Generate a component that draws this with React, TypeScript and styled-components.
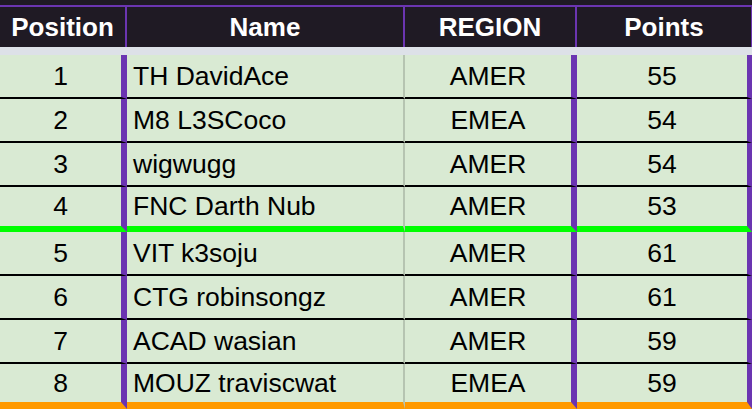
import React from "react";
import styled, { createGlobalStyle } from "styled-components";

type Entry = {
  pos: number;
  name: string;
  region: string;
  points: number;
  cut?: "qualify" | "end";
};

const rows: Entry[] = [
  { pos: 1, name: "TH DavidAce", region: "AMER", points: 55 },
  { pos: 2, name: "M8 L3SCoco", region: "EMEA", points: 54 },
  { pos: 3, name: "wigwugg", region: "AMER", points: 54 },
  { pos: 4, name: "FNC Darth Nub", region: "AMER", points: 53, cut: "qualify" },
  { pos: 5, name: "VIT k3soju", region: "AMER", points: 61 },
  { pos: 6, name: "CTG robinsongz", region: "AMER", points: 61 },
  { pos: 7, name: "ACAD wasian", region: "AMER", points: 59 },
  { pos: 8, name: "MOUZ traviscwat", region: "EMEA", points: 59, cut: "end" },
];

const PURPLE = "#6b35b1";

const GlobalStyle = createGlobalStyle`
  html, body {
    margin: 0;
    padding: 0;
    background: #dde1e8;
    font-family: "Liberation Sans", Arial, sans-serif;
  }
`;

const Sheet = styled.div`
  width: 752px;
  height: 409px;
  overflow: hidden;
`;

const HeaderRow = styled.div`
  display: grid;
  grid-template-columns: 127px 278px 172px 175px;
  background: #1f1a24;
  padding-top: 5px;
`;

const HeaderCell = styled.div<{ $last?: boolean }>`
  height: 40px;
  border-top: 2px solid ${PURPLE};
  border-right: ${(p) => (p.$last ? "1px" : "2px")} solid ${PURPLE};
  display: flex;
  align-items: center;
  justify-content: center;
  color: #fff;
  font-weight: 700;
  font-size: 26px;
`;

const Band = styled.div`
  height: 8px;
  background: #dde1e8;
`;

const Row = styled.div`
  display: grid;
  grid-template-columns: 127px 278px 172px 175px;
`;

const lineFor = (cut?: Entry["cut"]) =>
  cut === "qualify"
    ? "6px solid #00ff00"
    : cut === "end"
    ? "7px solid #ff9900"
    : "2px solid #000";

const Cell = styled.div<{
  $cut?: Entry["cut"];
  $divider: "bar" | "thin" | "edge";
  $align?: "left" | "center";
}>`
  height: ${(p) => (p.$cut === "qualify" ? 39 : p.$cut === "end" ? 38 : 42)}px;
  background: #d9ead3;
  border-bottom: ${(p) => lineFor(p.$cut)};
  border-right: ${(p) =>
    p.$divider === "bar"
      ? `6px solid ${PURPLE}`
      : p.$divider === "edge"
      ? `5px solid ${PURPLE}`
      : "2px solid #b6c4b1"};
  display: flex;
  align-items: center;
  justify-content: ${(p) => (p.$align === "left" ? "flex-start" : "center")};
  padding-left: ${(p) => (p.$align === "left" ? "6px" : "0")};
  color: #000;
  font-size: 26.5px;
  white-space: nowrap;
`;

export default function App() {
  return (
    <Sheet>
      <GlobalStyle />
      <HeaderRow>
        <HeaderCell>Position</HeaderCell>
        <HeaderCell>Name</HeaderCell>
        <HeaderCell>REGION</HeaderCell>
        <HeaderCell $last>Points</HeaderCell>
      </HeaderRow>
      <Band />
      {rows.map((r) => (
        <Row key={r.pos}>
          <Cell $cut={r.cut} $divider="bar">
            {r.pos}
          </Cell>
          <Cell $cut={r.cut} $divider="thin" $align="left">
            {r.name}
          </Cell>
          <Cell $cut={r.cut} $divider="bar">
            {r.region}
          </Cell>
          <Cell $cut={r.cut} $divider="edge">
            {r.points}
          </Cell>
        </Row>
      ))}
    </Sheet>
  );
}
